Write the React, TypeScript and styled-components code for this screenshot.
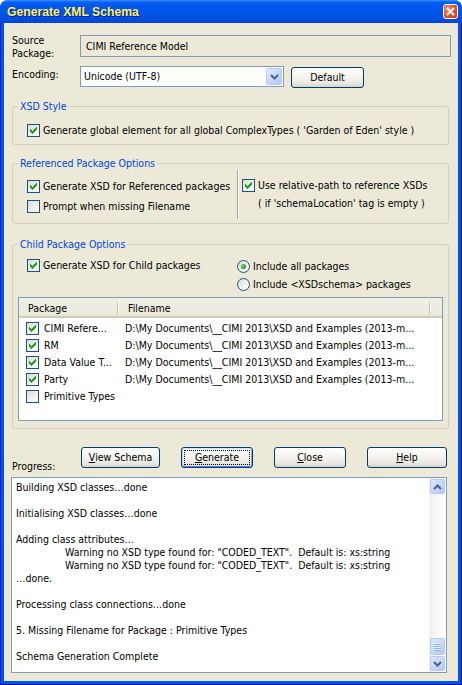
import styled, { createGlobalStyle, css } from 'styled-components'

const UI_FONT = `"DejaVu Sans Condensed", "DejaVu Sans", "Liberation Sans", sans-serif`

const GlobalStyle = createGlobalStyle`
  html, body {
    margin: 0;
    padding: 0;
    background: #ffffff;
  }
  body {
    font-family: ${UI_FONT};
    font-stretch: condensed;
    font-size: 10.5px;
    line-height: 13px;
    color: #000000;
  }
  * {
    box-sizing: border-box;
  }
`

const Window = styled.div`
  width: 462px;
  height: 685px;
  display: flex;
  flex-direction: column;
  border-radius: 8px 8px 0 0;
  overflow: hidden;
  background: #0055e5;
`

const TitleBar = styled.div`
  height: 23px;
  flex: none;
  display: flex;
  align-items: center;
  justify-content: space-between;
  padding: 0 4px 0 7px;
  background: linear-gradient(
    to bottom,
    #3d95ff 0px,
    #0a62f5 2px,
    #0058ee 5px,
    #0056eb 12px,
    #0050e0 18px,
    #0046d5 23px
  );
`

const Title = styled.span`
  font-family: "Liberation Sans", Arial, sans-serif;
  font-stretch: normal;
  font-weight: bold;
  font-size: 12.2px;
  color: #fff46a;
  text-shadow: 1px 1px 0 #0a1883;
  margin-top: 1px;
`

const CloseButton = styled.div`
  width: 15px;
  height: 15px;
  border: 1px solid #ffffff;
  border-radius: 3px;
  background: radial-gradient(circle at 30% 30%, #f0957a 0%, #dd5a33 45%, #c43d12 100%);
  display: flex;
  align-items: center;
  justify-content: center;
`

const Frame = styled.div`
  flex: 1;
  display: flex;
  padding: 0 4px 4px 4px;
  background: #0055e5;
  box-shadow: inset 1px 0 0 #0019cf, inset -1px 0 0 #00138c, inset 0 -1px 0 #00138c;
`

const Body = styled.div`
  flex: 1;
  display: flex;
  flex-direction: column;
  background: #ece9d8;
  padding: 11px 7px 8px 8px;
`

const SourceRow = styled.div`
  display: flex;
  height: 26px;
`

const EncodingRow = styled.div`
  display: flex;
  align-items: flex-start;
  height: 22px;
  margin-top: 6px;
`

const FieldLabel = styled.div<{ $mt?: number }>`
  width: 68px;
  flex: none;
  margin-top: ${p => p.$mt ?? 0}px;
`

const ReadOnlyField = styled.div`
  flex: 1;
  height: 22px;
  margin-top: 1px;
  border: 1px solid #7f9db9;
  background: #ece9d8;
  display: flex;
  align-items: center;
  padding-left: 5px;
`

const Select = styled.div`
  width: 204px;
  height: 21px;
  border: 1px solid #7f9db9;
  background: #ffffff;
  display: flex;
  align-items: center;
  justify-content: space-between;
  padding-left: 3px;
`

const XpButtonFace = css`
  border: 1px solid #b6caf6;
  border-radius: 2px;
  background: linear-gradient(135deg, #e0e9fe 0%, #c8d7fc 50%, #b5c9f7 100%);
  display: flex;
  align-items: center;
  justify-content: center;
`

const DropButton = styled.div`
  ${XpButtonFace};
  width: 16px;
  height: 17px;
  margin-right: 1px;
`

const PushButton = styled.button<{ $width: number; $focused?: boolean; $mt?: number }>`
  width: ${p => p.$width}px;
  height: 21px;
  flex: none;
  margin: ${p => p.$mt ?? 0}px 0 0 0;
  padding: 0;
  font: inherit;
  color: #000000;
  border: 1px solid #003c74;
  border-radius: 3px;
  background: linear-gradient(to bottom, #ffffff 0%, #f5f4f0 45%, #ecebe5 75%, #d8d3c9 100%);
  display: flex;
  align-items: center;
  justify-content: center;
  ${p =>
    p.$focused &&
    css`
      box-shadow: inset 0 1px 0 #cee7ff, inset 0 -1px 0 #6982ee, inset 1px 0 0 #b8d4f8, inset -1px 0 0 #8aa8ee;
      outline: 1px dotted #000000;
      outline-offset: -4px;
    `}
`

const Mn = styled.span`
  text-decoration: underline;
`

const GroupBox = styled.fieldset<{ $mt: number }>`
  margin: ${p => p.$mt}px 2px 0 0;
  padding: 0;
  border: 1px solid #d0d0bf;
  border-radius: 3px;
  min-width: 0;
`

const Legend = styled.legend`
  margin-left: 5px;
  padding: 0 2px;
  color: #0046d5;
  line-height: 13px;
`

const XsdContent = styled.div`
  padding: 11px 0 7px 14px;
`

const OptionLine = styled.div`
  display: flex;
  align-items: center;
  height: 13px;
  gap: 3px;
  white-space: nowrap;
`

const RefContent = styled.div`
  display: flex;
  align-items: flex-start;
`

const LeftColumn = styled.div<{ $pt: number; $pb?: number }>`
  width: 224px;
  flex: none;
  display: flex;
  flex-direction: column;
  gap: 7px;
  padding: ${p => p.$pt}px 0 ${p => p.$pb ?? 0}px 14px;
`

const VSeparator = styled.div`
  width: 2px;
  height: 49px;
  flex: none;
  border-left: 1px solid #aca899;
  border-right: 1px solid #ffffff;
`

const RightColumn = styled.div`
  padding: 9px 0 0 3px;
`

const SubNote = styled.div`
  margin-top: 5px;
  padding-left: 16px;
  white-space: nowrap;
`

const ChildOptions = styled.div`
  display: flex;
  height: 40px;
`

const RadioColumn = styled.div`
  display: flex;
  flex-direction: column;
  gap: 5px;
  padding-top: 9px;
`

const ListView = styled.div`
  height: 124px;
  margin: 6px 5px 7px 5px;
  border: 1px solid #7f9db9;
  background: #ffffff;
  overflow: hidden;
`

const ListHeader = styled.div`
  height: 20px;
  display: flex;
  align-items: flex-start;
  background: linear-gradient(
    to bottom,
    #f0efe6 0px,
    #ebeadb 17px,
    #e2decd 17px,
    #e2decd 18px,
    #d6d2c2 18px,
    #d6d2c2 19px,
    #cbc7b8 19px
  );
`

const HeaderCell = styled.div<{ $width: number }>`
  width: ${p => p.$width}px;
  flex: none;
  padding: 4px 0 0 9px;
`

const HeaderDivider = styled.div`
  width: 2px;
  height: 12px;
  flex: none;
  margin-top: 4px;
  border-left: 1px solid #c7c5b2;
  border-right: 1px solid #ffffff;
`

const ListBody = styled.div`
  padding-top: 2px;
`

const ListRow = styled.div`
  height: 17px;
  display: flex;
  align-items: center;
`

const PackageCell = styled.div`
  width: 100px;
  flex: none;
  display: flex;
  align-items: center;
  gap: 5px;
  padding-left: 7px;
  white-space: nowrap;
  overflow: hidden;
`

const FileCell = styled.div`
  width: 311px;
  flex: none;
  padding-left: 6px;
  white-space: nowrap;
  overflow: hidden;
`

const ActionRow = styled.div`
  display: flex;
  align-items: flex-start;
  gap: 21px;
  height: 26px;
  margin-top: 18px;
`

const ProgressLabel = styled.div`
  width: 48px;
  flex: none;
  margin-top: 13px;
`

const ProgressBox = styled.div`
  flex: 1;
  display: flex;
  margin: 4px 4px 0 -1px;
  border: 1px solid #7f9db9;
  background: #ffffff;
  min-height: 0;
`

const ProgressText = styled.div`
  flex: 1;
  padding: 3px 0 0 4px;
  overflow: hidden;
`

const LogLine = styled.div<{ $indent?: boolean }>`
  height: 13px;
  white-space: pre;
  padding-left: ${p => (p.$indent ? 49 : 0)}px;
`

const ScrollBar = styled.div`
  width: 17px;
  flex: none;
  display: flex;
  flex-direction: column;
  padding: 1px;
  background: linear-gradient(to right, #f3f1ec, #fefefb);
`

const ScrollButton = styled.div`
  ${XpButtonFace};
  height: 15px;
  flex: none;
`

const ScrollTrack = styled.div`
  flex: 1;
  display: flex;
  flex-direction: column;
  justify-content: flex-end;
  padding-bottom: 1px;
`

const ScrollThumb = styled.div`
  ${XpButtonFace};
  height: 17px;
  flex-direction: column;
  gap: 0;
`

const GripLine = styled.div`
  width: 7px;
  height: 2px;
  border-top: 1px solid #eef4fe;
  border-bottom: 1px solid #8cb0f8;
`

const CheckFrame = styled.span`
  width: 13px;
  height: 13px;
  flex: none;
  display: block;
  border: 1px solid #1c5180;
  background: linear-gradient(135deg, #dcdcd7 0%, #f4f4f1 70%, #ffffff 100%);
`

const RadioFrame = styled.span`
  width: 13px;
  height: 13px;
  flex: none;
  border-radius: 50%;
  border: 1px solid #1c5180;
  background: linear-gradient(135deg, #dcdcd7 0%, #ffffff 100%);
  display: flex;
  align-items: center;
  justify-content: center;
`

const RadioDot = styled.span`
  width: 5px;
  height: 5px;
  border-radius: 50%;
  background: radial-gradient(circle at 40% 40%, #6ee06a 0%, #21a121 60%, #1b8a1b 100%);
`

function CheckBox({ checked }: { checked?: boolean }) {
  return (
    <CheckFrame>
      {checked && (
        <svg width="11" height="11" viewBox="0 0 11 11" shapeRendering="crispEdges" style={{ display: 'block' }}>
          <path
            fill="#21a121"
            d="M8 2h1v1h-1z M7 3h2v1h-2z M2 4h1v1h-1z M6 4h3v1h-3z M2 5h2v1h-2z M5 5h3v1h-3z M2 6h5v1h-5z M3 7h3v1h-3z M4 8h1v1h-1z"
          />
        </svg>
      )}
    </CheckFrame>
  )
}

function Radio({ selected }: { selected?: boolean }) {
  return <RadioFrame>{selected && <RadioDot />}</RadioFrame>
}

function Chevron({ up }: { up?: boolean }) {
  return (
    <svg width="9" height="6" viewBox="0 0 9 6">
      <polyline
        points={up ? '1,5 4.5,1.5 8,5' : '1,1 4.5,4.5 8,1'}
        fill="none"
        stroke="#4d6185"
        strokeWidth="2"
      />
    </svg>
  )
}

const FILE_PATH = 'D:\\My Documents\\__CIMI 2013\\XSD and Examples (2013-m...'

const packages = [
  { name: 'CIMI Refere...', file: FILE_PATH, checked: true },
  { name: 'RM', file: FILE_PATH, checked: true },
  { name: 'Data Value T...', file: FILE_PATH, checked: true },
  { name: 'Party', file: FILE_PATH, checked: true },
  { name: 'Primitive Types', file: '', checked: false },
]

const WARNING = 'Warning no XSD type found for: "CODED_TEXT".  Default is: xs:string'

const logLines: { text: string; indent?: boolean }[] = [
  { text: 'Building XSD classes\u2026done' },
  { text: '' },
  { text: 'Initialising XSD classes\u2026done' },
  { text: '' },
  { text: 'Adding class attributes\u2026' },
  { text: WARNING, indent: true },
  { text: WARNING, indent: true },
  { text: '\u2026done.' },
  { text: '' },
  { text: 'Processing class connections\u2026done' },
  { text: '' },
  { text: '5. Missing Filename for Package : Primitive Types' },
  { text: '' },
  { text: 'Schema Generation Complete' },
]

export default function App() {
  return (
    <>
      <GlobalStyle />
      <Window>
        <TitleBar>
          <Title>Generate XML Schema</Title>
          <CloseButton>
            <svg width="9" height="9" viewBox="0 0 9 9">
              <path d="M1.5 1.5 L7.5 7.5 M7.5 1.5 L1.5 7.5" stroke="#ffffff" strokeWidth="1.8" strokeLinecap="square" />
            </svg>
          </CloseButton>
        </TitleBar>
        <Frame>
          <Body>
            <SourceRow>
              <FieldLabel>
                Source
                <br />
                Package:
              </FieldLabel>
              <ReadOnlyField>CIMI Reference Model</ReadOnlyField>
            </SourceRow>

            <EncodingRow>
              <FieldLabel $mt={2}>Encoding:</FieldLabel>
              <Select>
                <span>Unicode (UTF-8)</span>
                <DropButton>
                  <Chevron />
                </DropButton>
              </Select>
              <PushButton $width={73} $mt={1} style={{ marginLeft: 7 }}>
                Default
              </PushButton>
            </EncodingRow>

            <GroupBox $mt={12}>
              <Legend>XSD Style</Legend>
              <XsdContent>
                <OptionLine>
                  <CheckBox checked />
                  <span>Generate global element for all global ComplexTypes ( 'Garden of Eden' style )</span>
                </OptionLine>
              </XsdContent>
            </GroupBox>

            <GroupBox $mt={12}>
              <Legend>Referenced Package Options</Legend>
              <RefContent>
                <LeftColumn $pt={10} $pb={10}>
                  <OptionLine>
                    <CheckBox checked />
                    <span>Generate XSD for Referenced packages</span>
                  </OptionLine>
                  <OptionLine>
                    <CheckBox />
                    <span>Prompt when missing Filename</span>
                  </OptionLine>
                </LeftColumn>
                <VSeparator />
                <RightColumn>
                  <OptionLine>
                    <CheckBox checked />
                    <span>Use relative-path to reference XSDs</span>
                  </OptionLine>
                  <SubNote>( if 'schemaLocation' tag is empty )</SubNote>
                </RightColumn>
              </RefContent>
            </GroupBox>

            <GroupBox $mt={14}>
              <Legend>Child Package Options</Legend>
              <ChildOptions>
                <LeftColumn $pt={8}>
                  <OptionLine>
                    <CheckBox checked />
                    <span>Generate XSD for Child packages</span>
                  </OptionLine>
                </LeftColumn>
                <RadioColumn>
                  <OptionLine>
                    <Radio selected />
                    <span>Include all packages</span>
                  </OptionLine>
                  <OptionLine>
                    <Radio />
                    <span>{'Include <XSDschema> packages'}</span>
                  </OptionLine>
                </RadioColumn>
              </ChildOptions>
              <ListView>
                <ListHeader>
                  <HeaderCell $width={98}>Package</HeaderCell>
                  <HeaderDivider />
                  <HeaderCell $width={310}>Filename</HeaderCell>
                  <HeaderDivider />
                </ListHeader>
                <ListBody>
                  {packages.map(pkg => (
                    <ListRow key={pkg.name}>
                      <PackageCell>
                        <CheckBox checked={pkg.checked} />
                        <span>{pkg.name}</span>
                      </PackageCell>
                      <FileCell>{pkg.file}</FileCell>
                    </ListRow>
                  ))}
                </ListBody>
              </ListView>
            </GroupBox>

            <ActionRow>
              <ProgressLabel>Progress:</ProgressLabel>
              <PushButton $width={79}>
                <Mn>V</Mn>iew Schema
              </PushButton>
              <PushButton $width={72} $focused>
                <Mn>G</Mn>enerate
              </PushButton>
              <PushButton $width={72}>
                <Mn>C</Mn>lose
              </PushButton>
              <PushButton $width={80}>
                <Mn>H</Mn>elp
              </PushButton>
            </ActionRow>

            <ProgressBox>
              <ProgressText>
                {logLines.map((line, i) => (
                  <LogLine key={i} $indent={line.indent}>
                    {line.text}
                  </LogLine>
                ))}
              </ProgressText>
              <ScrollBar>
                <ScrollButton>
                  <Chevron up />
                </ScrollButton>
                <ScrollTrack>
                  <ScrollThumb>
                    <GripLine />
                    <GripLine />
                    <GripLine />
                    <GripLine />
                  </ScrollThumb>
                </ScrollTrack>
                <ScrollButton>
                  <Chevron />
                </ScrollButton>
              </ScrollBar>
            </ProgressBox>
          </Body>
        </Frame>
      </Window>
    </>
  )
}
